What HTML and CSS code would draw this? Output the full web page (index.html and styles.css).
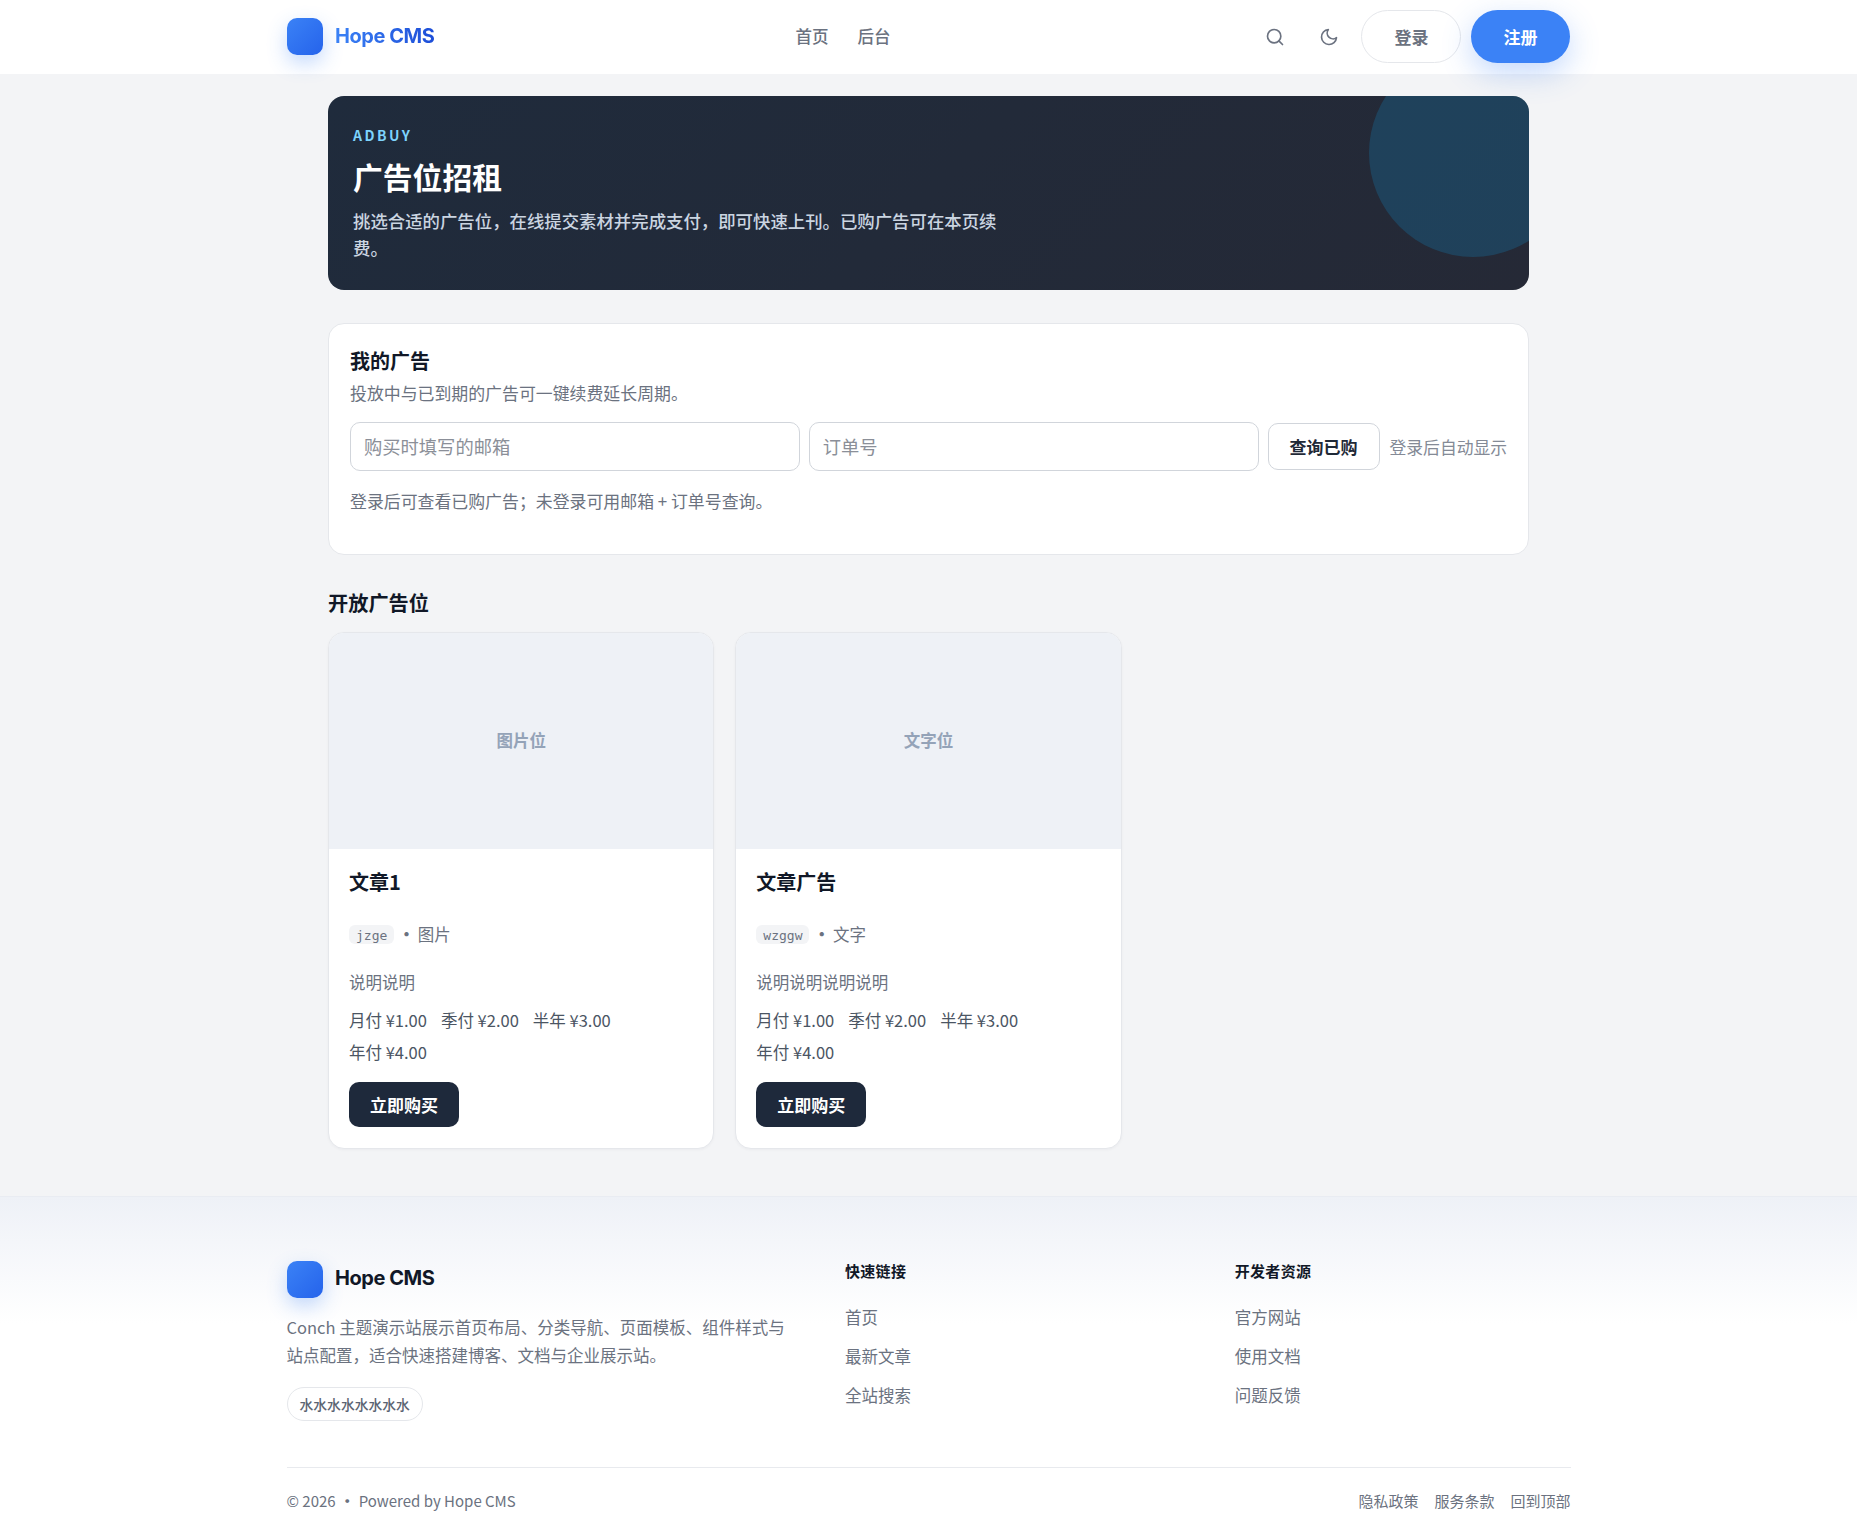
FILE: index.html
```html
<!DOCTYPE html>
<html lang="zh-CN">
<head>
<meta charset="utf-8">
<title>广告位招租 - Hope CMS</title>
<link rel="stylesheet" href="styles.css">
</head>
<body>
<header class="site-header">
  <div class="header-inner">
    <a class="brand" href="#"><span class="brand-mark"></span><span class="brand-name brand-name-grad">Hope CMS</span></a>
    <nav class="main-nav"><a href="#">首页</a><a href="#">后台</a></nav>
    <div class="header-actions">
      <button class="icon-btn" aria-label="搜索"><svg viewBox="0 0 24 24" width="20" height="20" fill="none" stroke="currentColor" stroke-width="2" stroke-linecap="round" stroke-linejoin="round"><circle cx="11" cy="11" r="8"/><line x1="21" y1="21" x2="16.65" y2="16.65"/></svg></button>
      <button class="icon-btn" aria-label="主题"><svg viewBox="0 0 24 24" width="20" height="20" fill="none" stroke="currentColor" stroke-width="2" stroke-linecap="round" stroke-linejoin="round"><path d="M21 12.79A9 9 0 1 1 11.21 3 7 7 0 0 0 21 12.79z"/></svg></button>
      <a class="pill pill-ghost" href="#">登录</a>
      <a class="pill pill-primary" href="#">注册</a>
    </div>
  </div>
</header>

<main class="page">
  <section class="hero">
    <span class="hero-orb"></span>
    <div class="hero-kicker">ADBUY</div>
    <h1 class="hero-title">广告位招租</h1>
    <p class="hero-sub">挑选合适的广告位，在线提交素材并完成支付，即可快速上刊。已购广告可在本页续费。</p>
  </section>

  <section class="panel">
    <h2 class="panel-title">我的广告</h2>
    <p class="panel-sub">投放中与已到期的广告可一键续费延长周期。</p>
    <form class="query-row">
      <input class="field" type="text" placeholder="购买时填写的邮箱">
      <input class="field" type="text" placeholder="订单号">
      <button class="query-btn" type="button">查询已购</button>
      <span class="query-note">登录后自动显示</span>
    </form>
    <p class="panel-hint">登录后可查看已购广告；未登录可用邮箱 + 订单号查询。</p>
  </section>

  <h2 class="section-title">开放广告位</h2>
  <div class="slot-grid">
    <article class="slot">
      <div class="slot-media">图片位</div>
      <div class="slot-body">
        <h3 class="slot-title">文章1</h3>
        <div class="slot-meta"><code class="slot-code">jzge</code><span class="slot-dot">·</span><span>图片</span></div>
        <p class="slot-desc">说明说明</p>
        <div class="slot-prices"><span>月付 ¥1.00</span><span>季付 ¥2.00</span><span>半年 ¥3.00</span><span>年付 ¥4.00</span></div>
        <a class="buy-btn" href="#">立即购买</a>
      </div>
    </article>
    <article class="slot">
      <div class="slot-media">文字位</div>
      <div class="slot-body">
        <h3 class="slot-title">文章广告</h3>
        <div class="slot-meta"><code class="slot-code">wzggw</code><span class="slot-dot">·</span><span>文字</span></div>
        <p class="slot-desc">说明说明说明说明</p>
        <div class="slot-prices"><span>月付 ¥1.00</span><span>季付 ¥2.00</span><span>半年 ¥3.00</span><span>年付 ¥4.00</span></div>
        <a class="buy-btn" href="#">立即购买</a>
      </div>
    </article>
  </div>
</main>

<footer class="site-footer">
  <div class="footer-inner">
    <div class="footer-grid">
      <div class="footer-about">
        <a class="brand" href="#"><span class="brand-mark"></span><span class="brand-name">Hope CMS</span></a>
        <p class="footer-desc">Conch 主题演示站展示首页布局、分类导航、页面模板、组件样式与站点配置，适合快速搭建博客、文档与企业展示站。</p>
        <span class="footer-tag">水水水水水水水水</span>
      </div>
      <div class="footer-col">
        <h4>快速链接</h4>
        <a href="#">首页</a><a href="#">最新文章</a><a href="#">全站搜索</a>
      </div>
      <div class="footer-col">
        <h4>开发者资源</h4>
        <a href="#">官方网站</a><a href="#">使用文档</a><a href="#">问题反馈</a>
      </div>
    </div>
    <div class="footer-bottom">
      <div class="footer-copy"><span>© 2026</span><span class="footer-dot">·</span><span>Powered by Hope CMS</span></div>
      <div class="footer-links"><a href="#">隐私政策</a><a href="#">服务条款</a><a href="#">回到顶部</a></div>
    </div>
  </div>
</footer>
</body>
</html>
```

FILE: styles.css
```css
* { box-sizing: border-box; }
html, body { margin: 0; padding: 0; }
body {
  background: #f3f4f6;
  color: #111827;
  font-family: "Noto Sans CJK SC", "Noto Sans", sans-serif;
  font-size: 16px;
}
a { color: inherit; text-decoration: none; }
h1, h2, h3, h4, p { margin: 0; }

.site-header { height: 74px; background: #fff; }
.header-inner {
  width: 1284px; height: 74px; margin: 0 auto; padding-bottom: 1px;
  display: flex; align-items: center; justify-content: space-between;
}
.brand { display: flex; align-items: center; gap: 12.5px; }
.brand-mark {
  width: 36px; height: 37px; border-radius: 10px;
  background: linear-gradient(135deg, #3b82f6, #2563eb);
  box-shadow: 0 8px 20px rgba(59, 130, 246, .3);
}
.brand-name {
  font-family: "Inter", "Liberation Sans", Arial, sans-serif;
  font-weight: 700; font-size: 20px; letter-spacing: -.45px; color: #111827;
  padding-bottom: 2px;
}
.brand-name-grad {
  background: linear-gradient(90deg, #3b82f6, #1d4ed8);
  -webkit-background-clip: text; background-clip: text;
  color: transparent;
}
.main-nav { display: flex; gap: 29px; font-size: 16.5px; color: #6b7280; font-weight: 500; padding-bottom: 2px; margin-right: 1px; }
.header-actions { display: flex; align-items: center; gap: 9.5px; margin-right: .5px; }
.icon-btn {
  width: 45px; height: 44px; padding: 0; border: 0; background: none;
  color: #6b7280; display: flex; align-items: center; justify-content: center;
}
.pill {
  height: 53px; padding: 0 32.5px; border-radius: 27px;
  display: flex; align-items: center; font-size: 17px; font-weight: 700;
}
.pill-ghost { padding: 0 32px; background: #fff; border: 1px solid #e5e7eb; color: #6b7280; }
.pill-primary { background: #3b82f6; color: #fff; box-shadow: 0 10px 30px rgba(59, 130, 246, .3); }

.page { width: 1201px; margin: 0 auto; padding: 22px 0 47px; }

.hero {
  position: relative; overflow: hidden; height: 194px;
  border-radius: 16px; padding: 29px 24px 0 25px;
  background: linear-gradient(135deg, #1f2b3c, #252936);
  color: #fff;
}
.hero-orb {
  position: absolute; top: -47px; right: -48px;
  width: 208px; height: 208px; border-radius: 50%;
  background: rgba(14, 165, 233, .2);
}
.hero-kicker { font-size: 14px; font-weight: 700; letter-spacing: 2.5px; color: #7dd3fc; line-height: 20px; }
.hero-title { font-size: 29.8px; font-weight: 700; line-height: 42px; margin-top: 10px; }
.hero-sub { font-size: 17.4px; line-height: 27px; color: #cbd5e1; max-width: 650px; margin-top: 10px; font-weight: 500; }

.panel {
  margin-top: 33px; height: 232px; padding: 22px 21px;
  background: #fff; border: 1px solid #e5e7eb; border-radius: 16px;
}
.panel-title { font-size: 20px; font-weight: 700; line-height: 30px; }
.panel-sub { font-size: 16.9px; line-height: 26px; color: #6b7280; margin-top: 4px; }
.query-row { display: flex; align-items: center; gap: 9px; margin-top: 16px; }
.field {
  flex: 1; min-width: 0; height: 49px; padding: 0 13px 2px;
  border: 1px solid #d1d5db; border-radius: 10px; background: #fff;
  font: 400 18.3px "Noto Sans CJK SC", sans-serif; color: #111827;
}
.field::placeholder { color: #8b8f98; opacity: 1; }
.query-btn {
  height: 47px; padding: 0 21px; flex: none;
  border: 1px solid #d1d5db; border-radius: 10px; background: #fff;
  font: 700 17px "Noto Sans CJK SC", sans-serif; color: #1f2937;
}
.query-note { flex: none; margin-left: 1px; font-size: 16.8px; color: #848a96; }
.panel-hint { font-size: 16.9px; line-height: 26px; color: #6b7280; margin-top: 17px; }

.section-title { font-size: 20.2px; font-weight: 700; line-height: 30px; margin-top: 33px; }
.slot-grid { display: grid; grid-template-columns: repeat(3, 1fr); gap: 21px; margin-top: 14px; }
.slot { background: #fff; border: 1px solid #e5e7eb; border-radius: 16px; overflow: hidden; box-shadow: 0 1px 3px rgba(17, 24, 39, .04); }
.slot-media {
  height: 216px; padding-bottom: 2px; background: #eef1f6; color: #94a3b8;
  display: flex; align-items: center; justify-content: center;
  font-size: 16.5px; font-weight: 700;
}
.slot-body { padding: 18px 20px 21px; }
.slot-title { font-size: 20px; font-weight: 700; line-height: 30px; }
.slot-meta { display: flex; align-items: center; margin-top: 25px; color: #6b7280; font-size: 16.5px; line-height: 24px; }
.slot-code {
  font-family: "DejaVu Sans Mono", monospace; font-size: 13px; line-height: 19px;
  padding: 1px 7px 0; height: 19px; background: #f3f4f6; border-radius: 6px; color: #6b7280;
}
.slot-dot { margin: 0 3px 0 4px; font-weight: 700; }
.slot-desc { font-size: 16.5px; line-height: 26px; color: #6b7280; margin-top: 23px; }
.slot-prices { display: flex; flex-wrap: wrap; column-gap: 14px; row-gap: 6px; margin-top: 11.5px; font-size: 16.5px; line-height: 26px; color: #4b5563; max-width: 300px; }
.buy-btn {
  display: inline-flex; align-items: center; height: 45px; padding: 0 21px; margin-top: 17px;
  border-radius: 10px; background: #1e293b; color: #fff; font-size: 17px; font-weight: 700;
}

.site-footer { height: 343.5px; background: linear-gradient(180deg, #eef1f7, #fff 37%); border-top: 1px solid #e9ecf2; }
.footer-inner { width: 1284px; margin: 0 auto; padding-top: 64px; }
.footer-grid { display: grid; grid-template-columns: 504.5px 1fr 1fr; column-gap: 54px; height: 206px; }
.footer-desc { font-size: 16.5px; line-height: 28px; color: #6b7280; margin-top: 15px; }
.footer-tag {
  display: inline-block; margin-top: 18px; height: 34px; padding: 0 12px; line-height: 32px;
  background: #fff; border: 1px solid #e5e7eb; border-radius: 17px;
  font-size: 13.8px; font-weight: 500; color: #5b6472;
}
.footer-col { display: flex; flex-direction: column; align-items: flex-start; }
.footer-col h4 { font-size: 15px; font-weight: 700; line-height: 22px; letter-spacing: .3px; margin-top: -1px; }
.footer-col a { font-size: 16.5px; line-height: 24px; color: #6b7280; margin-top: 15px; }
.footer-col h4 + a { margin-top: 23.5px; }
.footer-bottom {
  display: flex; justify-content: space-between; align-items: center;
  border-top: 1px solid #e8eaee; height: 67px; font-size: 15px; color: #6b7280;
}
.footer-copy { display: flex; }
.footer-dot { margin: 0 4px; font-weight: 700; }
.footer-links { display: flex; gap: 16px; color: #6b7280; }
```
